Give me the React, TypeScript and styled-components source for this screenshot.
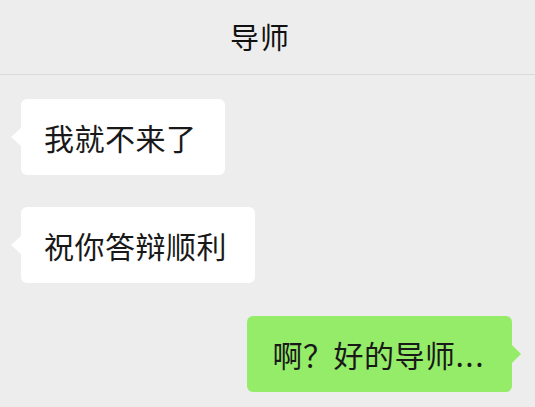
import React from 'react'
import styled, { createGlobalStyle } from 'styled-components'

const GlobalStyle = createGlobalStyle`
    html, body {
        margin: 0;
        padding: 0;
        background: #ededed;
    }

    body {
        font-family: "Noto Sans CJK SC", "Noto Sans", sans-serif;
        color: #191919;
    }
`;

const Page = styled.div`
    width: 535px;
    height: 407px;
    overflow: hidden;
    display: flex;
    flex-direction: column;
    background: #ededed;
`;

const Header = styled.div`
    height: 75px;
    flex-shrink: 0;
    box-sizing: border-box;
    display: flex;
    align-items: center;
    justify-content: center;
    padding: 0 15px 3px 0;
    border-bottom: 1px solid #dadada;
    background: #ededed;
    font-size: 29px;
    font-weight: 400;
    letter-spacing: 1px;
    color: #111;
`;

const Messages = styled.div`
    display: flex;
    flex-direction: column;
    gap: 32px;
    padding: 24px 23px 0 21px;
`;

const Row = styled.div<{ $mine?: boolean }>`
    display: flex;
    justify-content: ${p => (p.$mine ? 'flex-end' : 'flex-start')};
    margin-top: ${p => (p.$mine ? '1px' : '0')};
`;

const Bubble = styled.div<{ $mine?: boolean }>`
    position: relative;
    height: 76px;
    box-sizing: border-box;
    display: flex;
    align-items: center;
    padding: 0 ${p => (p.$mine ? '27px 0 25px' : '28px 0 23px')};
    border-radius: 6px;
    background: ${p => (p.$mine ? '#95ec69' : '#ffffff')};
    font-size: 30px;
    line-height: 40px;
    letter-spacing: 0.5px;
    white-space: nowrap;

    &::before {
        content: '';
        position: absolute;
        top: 29px;
        ${p => (p.$mine ? 'right: -9px;' : 'left: -10px;')}
        border-top: 9px solid transparent;
        border-bottom: 9px solid transparent;
        ${p => (p.$mine
            ? 'border-left: 9px solid #95ec69;'
            : 'border-right: 10px solid #ffffff;')}
    }
`;

const Dots = styled.span`
    letter-spacing: 1.5px;
`;

export default function App() {
    return (
        <Page>
            <GlobalStyle />
            <Header>导师</Header>
            <Messages>
                <Row>
                    <Bubble>我就不来了</Bubble>
                </Row>
                <Row>
                    <Bubble>祝你答辩顺利</Bubble>
                </Row>
                <Row $mine>
                    <Bubble $mine>啊？好的导师<Dots>...</Dots></Bubble>
                </Row>
            </Messages>
        </Page>
    )
}
